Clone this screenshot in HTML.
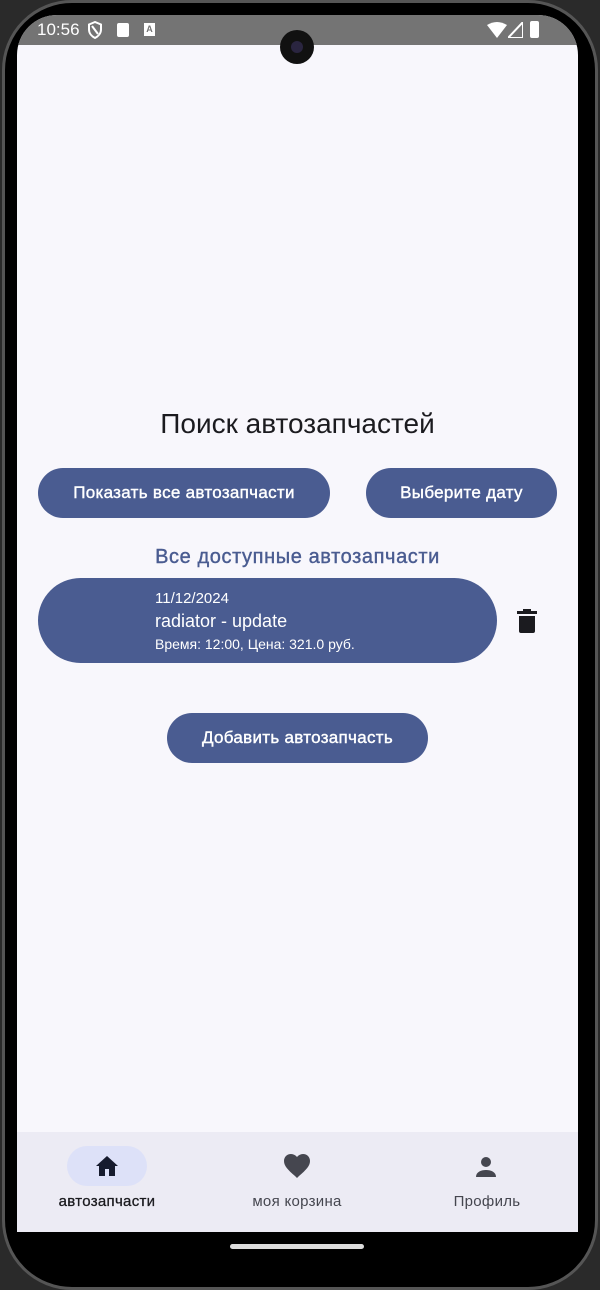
<!DOCTYPE html>
<html><head><meta charset="utf-8"><style>
*{margin:0;padding:0;box-sizing:border-box}
body{width:600px;height:1280px;background:#2a2a2a;position:relative;overflow:hidden;font-family:"Liberation Sans",sans-serif}
.frame{position:absolute;left:2px;top:0;width:596px;height:1290px;background:#000;border-radius:70px;border:3px solid #555}
.screen{position:absolute;left:17px;top:15px;width:561px;height:1217px;background:#f8f7fc;border-radius:40px 40px 0 0;overflow:hidden}
.sb{position:absolute;left:0;top:0;width:561px;height:30px;background:#747474;color:#fff;font-size:17px}
.btn{position:absolute;background:#4a5c91;color:#fff;border-radius:25px;height:50px;font-size:17px;display:flex;align-items:center;justify-content:center;letter-spacing:.3px;-webkit-text-stroke:.4px #fff}
.nav{position:absolute;left:0;top:1117px;width:561px;height:100px;background:#ecebf4}
.lbl{position:absolute;top:61px;font-size:15px;color:#45464f;transform:translateX(-50%);white-space:nowrap;letter-spacing:.3px}
</style></head><body>
<div class="frame"></div>
<div class="screen">
 <div class="sb"><span style="position:absolute;left:20px;top:5px">10:56</span>
  <svg style="position:absolute;left:70px;top:6px" width="16" height="18" viewBox="0 0 16 18"><path d="M8 1L2 3.5v5c0 4 3 7 6 8.5 3-1.5 6-4.5 6-8.5v-5z" fill="none" stroke="#fff" stroke-width="2"/><path d="M5 5l6 8" stroke="#fff" stroke-width="2"/></svg>
  <div style="position:absolute;left:100px;top:8px;width:12px;height:14px;background:#fff;border-radius:2px"></div>
  <div style="position:absolute;left:127px;top:8px;width:11px;height:13px;background:#fff;color:#747474;font-size:9px;font-weight:bold;text-align:center;line-height:13px">A</div>
  <svg style="position:absolute;left:470px;top:7px" width="20" height="16" viewBox="0 0 20 16"><path d="M0 3Q10-3 20 3L10 16z" fill="#fff"/></svg>
  <svg style="position:absolute;left:491px;top:7px" width="15" height="16" viewBox="0 0 15 16"><path d="M15 0V16H0z" fill="none" stroke="#fff" stroke-width="2"/></svg>
  <div style="position:absolute;left:513px;top:6px;width:9px;height:17px;background:#fff;border-radius:2px"></div>
 </div>
 <div style="position:absolute;left:263px;top:15px;width:34px;height:34px;border-radius:50%;background:#111"><div style="position:absolute;left:11px;top:11px;width:12px;height:12px;border-radius:50%;background:#2a2540"></div></div>
 <div style="position:absolute;left:0;top:393px;width:561px;text-align:center;font-size:28px;color:#1b1b1f">Поиск автозапчастей</div>
 <div class="btn" style="left:21px;top:453px;width:292px">Показать все автозапчасти</div>
 <div class="btn" style="left:349px;top:453px;width:191px">Выберите дату</div>
 <div style="position:absolute;left:0;top:531px;width:561px;text-align:center;font-size:20px;color:#4a5c91;letter-spacing:.6px;-webkit-text-stroke:.4px #4a5c91">Все доступные автозапчасти</div>
 <div style="position:absolute;left:21px;top:563px;width:459px;height:85px;background:#4a5c91;border-radius:43px;color:#fff">
  <div style="position:absolute;left:117px;top:12px;font-size:15px">11/12/2024</div>
  <div style="position:absolute;left:117px;top:33px;font-size:18px">radiator - update</div>
  <div style="position:absolute;left:117px;top:58px;font-size:14px">Время: 12:00, Цена: 321.0 руб.</div>
 </div>
 <svg style="position:absolute;left:500px;top:594px" width="20" height="24" viewBox="0 0 20 24"><path d="M6 0h8v2h6v3H0V2h6zM2 7h16v15a2 2 0 0 1-2 2H4a2 2 0 0 1-2-2z" fill="#1b1b1f"/></svg>
 <div class="btn" style="left:150px;top:698px;width:261px">Добавить автозапчасть</div>
 <div class="nav">
  <div style="position:absolute;left:50px;top:14px;width:80px;height:40px;border-radius:20px;background:#dde1f8"></div>
  <svg style="position:absolute;left:78px;top:23px" width="24" height="22" viewBox="0 0 24 22"><path d="M12 1L1 11h3v10h6v-7h4v7h6V11h3z" fill="#161b2e"/></svg>
  <svg style="position:absolute;left:267px;top:22px" width="26" height="24" viewBox="0 0 26 24"><path d="M13 24L11 22C4 16 0 12 0 7 0 3 3 0 7 0c2.5 0 4.5 1.200 6 3 1.500-1.800 3.500-3 6-3 4 0 7 3 7 7 0 5-4 9-11 15z" fill="#45464f"/></svg>
  <svg style="position:absolute;left:458px;top:24px" width="22" height="22" viewBox="0 0 22 22"><circle cx="11" cy="6" r="5" fill="#45464f"/><path d="M1 21c0-5 5-7 10-7s10 2 10 7z" fill="#45464f"/></svg>
  <div class="lbl" style="left:90px;color:#1b1b1f;-webkit-text-stroke:.3px #1b1b1f">автозапчасти</div>
  <div class="lbl" style="left:280px">моя корзина</div>
  <div class="lbl" style="left:470px">Профиль</div>
 </div>
</div>
<div style="position:absolute;left:230px;top:1244px;width:134px;height:5px;border-radius:3px;background:#ddd"></div>
</body></html>
